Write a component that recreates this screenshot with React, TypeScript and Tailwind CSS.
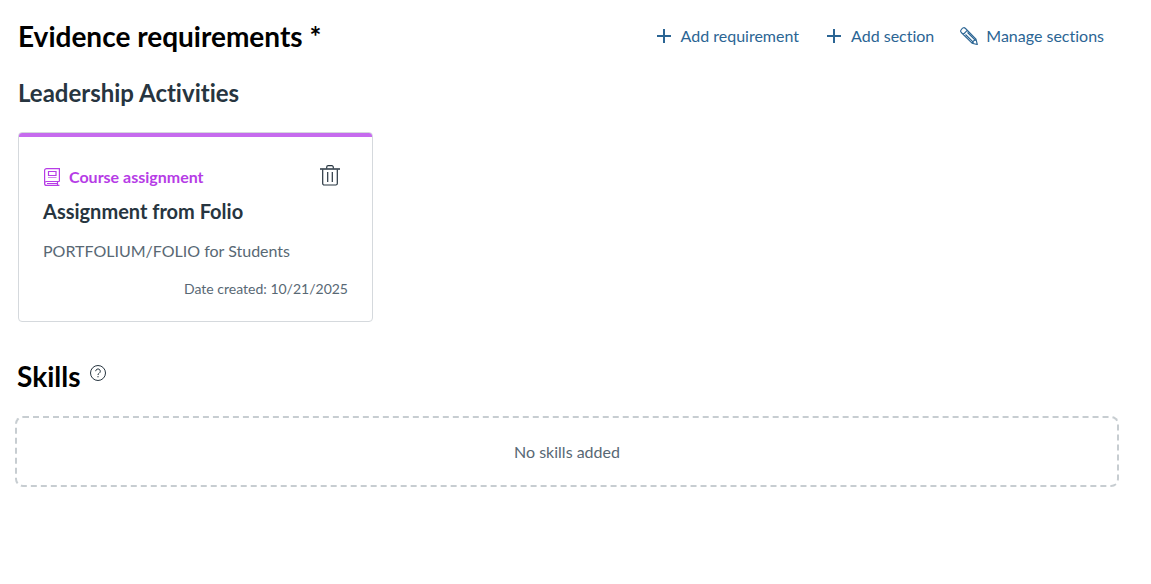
import type { ReactNode } from "react";

type Requirement = {
  id: string;
  kind: string;
  title: string;
  source: string;
  created: string;
};

const REQUIREMENTS: Requirement[] = [
  {
    id: "r1",
    kind: "Course assignment",
    title: "Assignment from Folio",
    source: "PORTFOLIUM/FOLIO for Students",
    created: "10/21/2025",
  },
];

function PlusIcon() {
  return (
    <svg width="18" height="18" viewBox="0 0 18 18" fill="none" stroke="currentColor" strokeWidth="2" aria-hidden="true">
      <path d="M9 2v14M2 9h14" />
    </svg>
  );
}

function PencilIcon() {
  return (
    <svg width="18" height="18" viewBox="0 0 18 18" fill="none" stroke="currentColor" strokeWidth="1.1" strokeLinejoin="round" aria-hidden="true">
      <path d="M1.300 2.600c-1 1-.8 2 0 2.900L12 16.200l5.300 1.300L16 12.200 5.500 1.500C4.300.3 3 .5 2.200 1.500zM3.200 7.500l4.300-4.300M5.500 7.500l8.200 8.200M7.500 5.500l8.200 8.200M12 16.200l1.500-2.200 2.500-1.800" />
    </svg>
  );
}

function BookIcon() {
  return (
    <svg width="18" height="18" viewBox="0 0 18 18" fill="none" stroke="currentColor" strokeWidth="1.2" aria-hidden="true">
      <path d="M16.400 13.500V.6H3.600a2 2 0 0 0-2 2v12.800a2 2 0 0 0 2 2h12.800M16.400 13.500H3.600a2 2 0 0 0-2 2M4 15.500h11M14.500 13.500v4" />
      <path d="M5.500 3.500h7.500v4H5.500z" />
      <path d="M5 9.500h8.500" opacity=".6" />
    </svg>
  );
}

function TrashIcon() {
  return (
    <svg width="20" height="22" viewBox="0 0 20 22" fill="none" stroke="currentColor" aria-hidden="true">
      <path d="M0 4h20" strokeWidth="1.500" />
      <path d="M6.700 3.500V2.200A1.500 1.500 0 0 1 8.200.7h3.600a1.500 1.500 0 0 1 1.500 1.500v1.300M2.700 4.500v14A1.500 1.500 0 0 0 4.200 20h11.600a1.500 1.500 0 0 0 1.500-1.500v-14M7.700 7v10M12.300 7v10" strokeWidth="1.200" />
    </svg>
  );
}

function HelpIcon() {
  return (
    <svg width="16" height="16" viewBox="0 0 16 16" fill="none" stroke="currentColor" strokeWidth="1" aria-hidden="true">
      <circle cx="8" cy="8" r="7.500" />
      <path d="M5.700 6.200a2.300 2.300 0 1 1 3.500 2c-.8.500-1.200.8-1.200 1.800M8 11v1.300" />
    </svg>
  );
}

function ActionButton({ icon, children }: { icon: ReactNode; children: ReactNode }) {
  return (
    <button type="button" className="flex items-center gap-2 text-base leading-6 text-[#2b6594]">
      {icon}
      {children}
    </button>
  );
}

function RequirementCard({ item }: { item: Requirement }) {
  return (
    <article className="w-full max-w-[355px] overflow-hidden rounded border border-[#d5d9dd]">
      <div className="h-1 bg-[#c66bee]" />
      <div className="px-6 pt-7 pb-5">
        <div className="flex items-start justify-between pr-2">
          <span className="flex items-center gap-2 text-base font-bold text-[#b63ce6]">
            <BookIcon />
            {item.kind}
          </span>
          <button type="button" aria-label="Delete requirement">
            <TrashIcon />
          </button>
        </div>
        <h3 className="mt-2 text-xl leading-7 font-bold">{item.title}</h3>
        <p className="mt-3 text-base leading-7 text-[#586874]">{item.source}</p>
        <p className="mt-3 text-right text-sm leading-6 text-[#586874]">Date created: {item.created}</p>
      </div>
    </article>
  );
}

export default function App() {
  return (
    <main className="bg-white pt-4 pr-8 pl-[15px] font-['Lato',sans-serif] text-[#273540] [font-variant-ligatures:none]">
      <div className="flex items-center justify-between px-[3px]">
        <h1 className="text-[28px] leading-10 font-bold text-black">Evidence requirements *</h1>
        <div className="flex items-center gap-[26px] pr-3">
          <ActionButton icon={<PlusIcon />}>Add requirement</ActionButton>
          <ActionButton icon={<PlusIcon />}>Add section</ActionButton>
          <ActionButton icon={<PencilIcon />}>Manage sections</ActionButton>
        </div>
      </div>

      <section className="px-[3px]">
        <h2 className="mt-5 text-2xl leading-[34px] font-bold">Leadership Activities</h2>
        <div className="mt-[22px]">
          {REQUIREMENTS.map((item) => (
            <RequirementCard key={item.id} item={item} />
          ))}
        </div>
      </section>

      <section className="mt-[34px]">
        <div className="flex items-start gap-[10px] pl-[2px]">
          <h2 className="text-[28px] leading-10 font-bold text-black">Skills</h2>
          <button type="button" aria-label="About skills" className="mt-[9px]">
            <HelpIcon />
          </button>
        </div>
        <div className="mt-5 rounded-lg border-2 border-dashed border-[#c7cdd1] pt-[22px] pb-[21px] text-center text-base leading-6 text-[#586874]">
          No skills added
        </div>
      </section>
    </main>
  );
}
